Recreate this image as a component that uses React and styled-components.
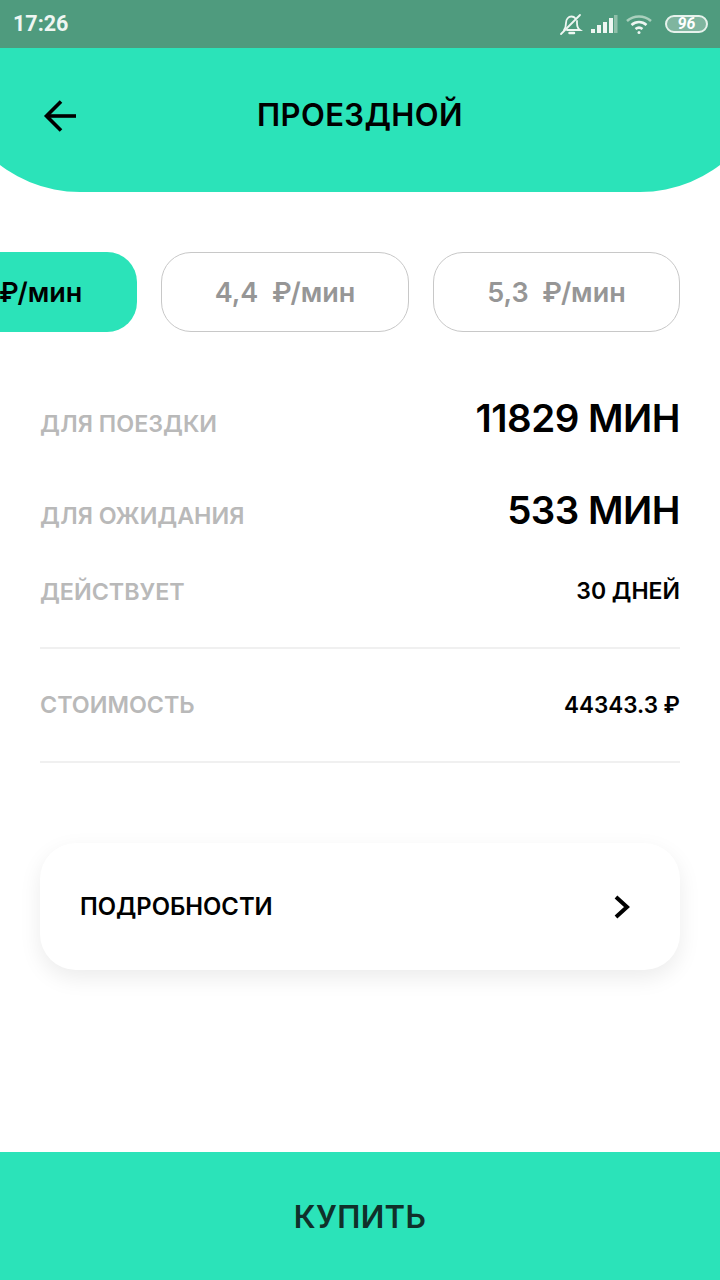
import React from 'react';
import styled, { createGlobalStyle } from 'styled-components';

const Global = createGlobalStyle`
  html, body { margin: 0; padding: 0; background: #fff; }
  body { font-family: "Inter", "Liberation Sans", sans-serif; }
`;
const Page = styled.div`
  width: 720px; height: 1280px; display: flex; flex-direction: column; overflow: hidden; background: #fff;
`;
const StatusBar = styled.div`
  height: 48px; flex: none; background: #4f9b7e; display: flex; align-items: center; justify-content: space-between;
  padding: 0 12px 0 13px; color: #eef6f2;
`;
const Clock = styled.span`
  font-family: "Roboto", sans-serif; font-weight: 700; font-size: 21.500px; margin-top: -1px;
`;
const StatusIcons = styled.div`
  display: flex; align-items: center; gap: 7px;
`;
const Battery = styled.div`
  width: 43px; height: 18px; box-sizing: border-box; border: 2px solid #e6f2ec; border-radius: 9px; margin-left: 5px;
  background: #7fb59f; display: flex; align-items: center; justify-content: center;
  font-family: "Roboto", sans-serif; font-weight: 700; font-size: 16px; line-height: 1; color: #fff; font-style: italic;
`;
const Header = styled.header`
  height: 144px; flex: none; margin: 0 -52px; padding: 47px 92px 0; box-sizing: border-box;
  background: #2be3b9; border-radius: 0 0 132px 132px;
  display: grid; grid-template-columns: 1fr auto 1fr; align-items: start;
`;
const BackButton = styled.div`
  width: 40px; height: 40px;
`;
const Title = styled.h1`
  margin: 2px 0 0; text-align: center; font-size: 31px; line-height: 36px; font-weight: 600; color: #000; letter-spacing: 0.400px;
`;
const Tabs = styled.div`
  display: flex; gap: 24px; margin: 60px 0 0 -111px; flex: none;
`;
const Tab = styled.div`
  width: ${p => p.$w}px; height: 80px; box-sizing: border-box; flex: none; border-radius: 30px;
  display: flex; align-items: center; justify-content: center; font-size: 27px; font-weight: 600; white-space: pre;
  background: ${p => (p.$active ? '#2be3b9' : '#fff')};
  color: ${p => (p.$active ? '#000' : '#969696')};
  border: ${p => (p.$active ? 'none' : '1px solid #c8c8c8')};
`;
const Details = styled.section`
  padding: 0 40px; display: flex; flex-direction: column; flex: none;
`;
const Row = styled.div`
  display: flex; justify-content: space-between; align-items: center; height: ${p => p.$h}px; margin-top: ${p => p.$mt || 0}px;
  padding-bottom: ${p => p.$pb || 0}px; box-sizing: border-box;
`;
const Label = styled.span`
  font-size: 23.300px; font-weight: 600; color: #b9b9b9; position: relative; top: ${p => p.$dy || 0}px;
`;
const BigValue = styled.span`
  font-size: 38.500px; font-weight: 600; color: #000; letter-spacing: -0.500px;
`;
const SmallValue = styled.span`
  font-size: ${p => p.$size || 23}px; font-weight: 600; color: #000;
`;
const Divider = styled.hr`
  width: 100%; height: 2px; margin: ${p => p.$mt || 0}px 0 0; border: none; background: #f0f0f0; flex: none;
`;
const Card = styled.div`
  margin: 80px 40px 0; height: 127px; flex: none; background: #fff; border-radius: 36px;
  box-shadow: 0 8px 22px rgba(0,0,0,0.08);
  display: flex; align-items: center; justify-content: space-between; padding: 0 46px 0 40px;
`;
const CardText = styled.span`
  font-size: 23.800px; font-weight: 600; color: #000;
`;
const BuyButton = styled.div`
  margin-top: auto; height: 128px; flex: none; background: #2be3b9; display: flex; align-items: center; justify-content: center;
  font-size: 31px; font-weight: 600; color: #10302a; letter-spacing: 0.400px;
`;

export default function App() {
  return (
    <Page>
      <Global />
      <StatusBar>
        <Clock>17:26</Clock>
        <StatusIcons>
          <svg width="24" height="24" viewBox="0 0 24 24" fill="none" stroke="#eef6f2" strokeWidth="1.800" strokeLinecap="round">
            <path d="M5 18c1.500-2 2-3 2-7 0-4 2.500-6.500 5.500-6.500 1.500 0 3 .7 4 2" />
            <path d="M18 9v2c0 4 .7 5.500 3 7H8" />
            <path d="M10.500 21h4.500" strokeWidth="2.500" />
            <path d="M2 22 21 3" />
          </svg>
          <svg width="28" height="20" viewBox="0 0 28 20">
            <rect x="1" y="15" width="4" height="4" fill="#eef6f2" />
            <rect x="7" y="11" width="4" height="8" fill="#eef6f2" />
            <rect x="13" y="8" width="4" height="11" fill="#eef6f2" />
            <rect x="19" y="4" width="4" height="15" fill="#eef6f2" />
            <rect x="24" y="1" width="3.500" height="18" fill="#8fbfa9" />
          </svg>
          <svg width="28" height="22" viewBox="0 0 28 22" fill="none" stroke="#eef6f2" strokeWidth="2.600">
            <path d="M2 8c7-6 17-6 24 0" stroke="#a9d0bd" />
            <path d="M6.500 12c4.500-4 10.500-4 15 0" />
            <path d="M10.500 16c2-1.500 5-1.500 7 0" />
            <circle cx="14" cy="19.500" r="1.500" fill="#eef6f2" stroke="none" />
          </svg>
          <Battery>96</Battery>
        </StatusIcons>
      </StatusBar>
      <Header>
        <BackButton>
          <svg width="40" height="40" viewBox="0 0 40 40" fill="none" stroke="#000" strokeWidth="3.600">
            <path d="M36 21H6" />
            <path d="M21 6.500 6.500 21 21 35.500" />
          </svg>
        </BackButton>
        <Title>ПРОЕЗДНОЙ</Title>
      </Header>
      <Tabs>
        <Tab $active $w={248}>{'3,6  ₽/мин'}</Tab>
        <Tab $w={248}>{'4,4  ₽/мин'}</Tab>
        <Tab $w={247}>{'5,3  ₽/мин'}</Tab>
      </Tabs>
      <Details>
        <Row $h={60} $mt={56}><Label $dy={5}>ДЛЯ ПОЕЗДКИ</Label><BigValue>11829 МИН</BigValue></Row>
        <Row $h={60} $mt={32}><Label $dy={5}>ДЛЯ ОЖИДАНИЯ</Label><BigValue>533 МИН</BigValue></Row>
        <Row $h={40} $mt={31}><Label>ДЕЙСТВУЕТ</Label><SmallValue>30 ДНЕЙ</SmallValue></Row>
        <Divider $mt={36} />
        <Row $h={112} $pb={2}><Label>СТОИМОСТЬ</Label><SmallValue $size={22.500}>44343.3 ₽</SmallValue></Row>
        <Divider />
      </Details>
      <Card>
        <CardText>ПОДРОБНОСТИ</CardText>
        <svg width="22" height="26" viewBox="0 0 22 26" fill="none" stroke="#000" strokeWidth="4">
          <path d="M4 3l11 10L4 23" />
        </svg>
      </Card>
      <BuyButton>КУПИТЬ</BuyButton>
    </Page>
  );
}
